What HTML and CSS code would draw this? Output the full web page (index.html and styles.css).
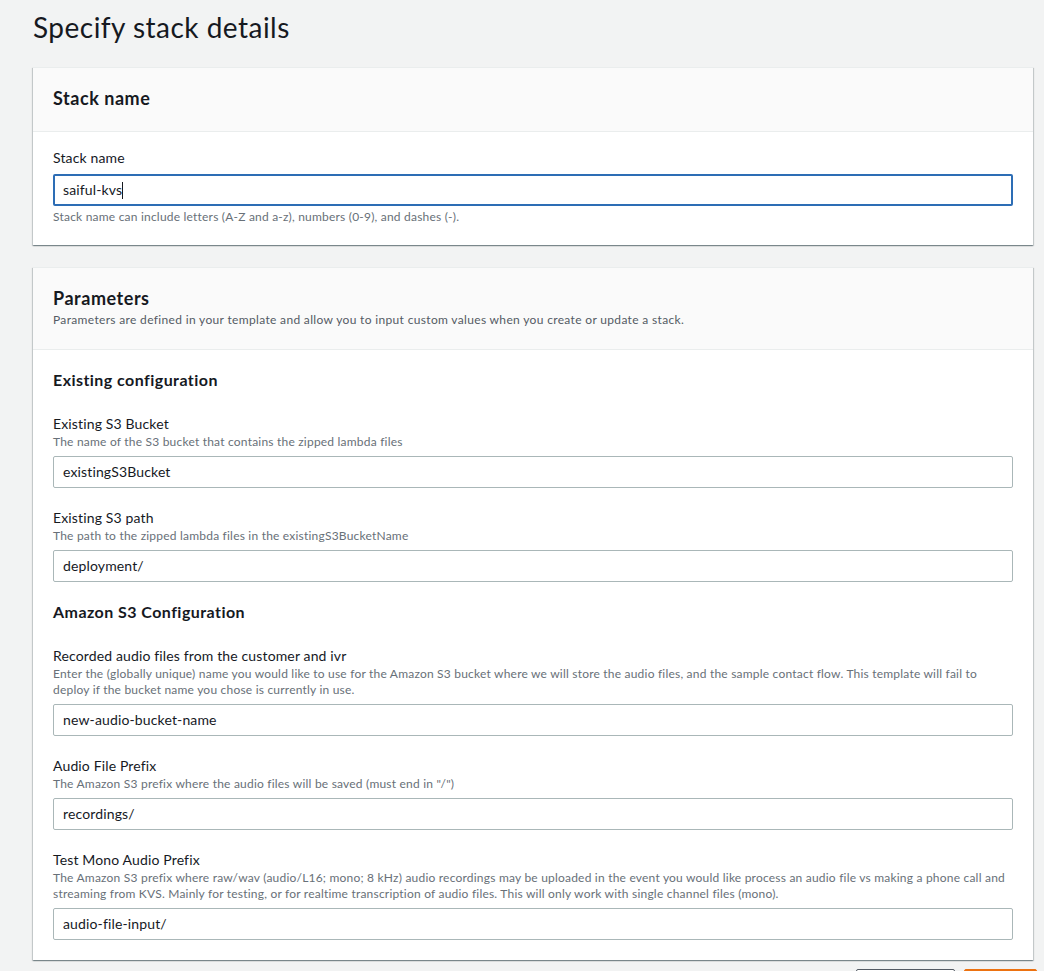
FILE: index.html
```html
<!DOCTYPE html>
<html lang="en">
<head>
<meta charset="utf-8">
<title>Specify stack details</title>
<link rel="stylesheet" href="styles.css">
</head>
<body>
<main class="page">
  <h1 class="page-title">Specify stack details</h1>

  <section class="card card-stack">
    <header class="card-header">
      <h2 class="card-title">Stack name</h2>
    </header>
    <div class="card-body">
      <div class="field">
        <label class="field-label">Stack name</label>
        <div class="input input-focused">saiful-kvs<span class="caret"></span></div>
        <p class="field-hint">Stack name can include letters (A-Z and a-z), numbers (0-9), and dashes (-).</p>
      </div>
    </div>
  </section>

  <section class="card card-params">
    <header class="card-header">
      <h2 class="card-title">Parameters</h2>
      <p class="card-desc">Parameters are defined in your template and allow you to input custom values when you create or update a stack.</p>
    </header>
    <div class="card-body">
      <h3 class="group-title">Existing configuration</h3>
      <div class="field">
        <label class="field-label">Existing S3 Bucket</label>
        <p class="field-desc">The name of the S3 bucket that contains the zipped lambda files</p>
        <div class="input">existingS3Bucket</div>
      </div>
      <div class="field">
        <label class="field-label">Existing S3 path</label>
        <p class="field-desc">The path to the zipped lambda files in the existingS3BucketName</p>
        <div class="input">deployment/</div>
      </div>

      <h3 class="group-title">Amazon S3 Configuration</h3>
      <div class="field">
        <label class="field-label">Recorded audio files from the customer and ivr</label>
        <p class="field-desc">Enter the (globally unique) name you would like to use for the Amazon S3 bucket where we will store the audio files, and the sample contact flow. This template will fail to deploy if the bucket name you chose is currently in use.</p>
        <div class="input">new-audio-bucket-name</div>
      </div>
      <div class="field">
        <label class="field-label">Audio File Prefix</label>
        <p class="field-desc">The Amazon S3 prefix where the audio files will be saved (must end in "/")</p>
        <div class="input">recordings/</div>
      </div>
      <div class="field">
        <label class="field-label">Test Mono Audio Prefix</label>
        <p class="field-desc">The Amazon S3 prefix where raw/wav (audio/L16; mono; 8 kHz) audio recordings may be uploaded in the event you would like process an audio file vs making a phone call and streaming from KVS. Mainly for testing, or for realtime transcription of audio files. This will only work with single channel files (mono).</p>
        <div class="input">audio-file-input/</div>
      </div>
    </div>
  </section>

  <div class="actions">
    <button class="btn btn-normal" aria-label="Previous"></button>
    <button class="btn btn-primary" aria-label="Next"></button>
  </div>
</main>
</body>
</html>
```

FILE: styles.css
```css
* { box-sizing: border-box; }

html, body {
  margin: 0;
  padding: 0;
  background: #f2f3f3;
  overflow: hidden;
}

body {
  font-family: Lato, "Noto Sans", Arial, sans-serif;
  color: #16191f;
  letter-spacing: 0.013em;
}

.page {
  width: 1000px;
  margin-left: 33px;
  padding-top: 9px;
}

.page-title {
  margin: 0;
  font-size: 28px;
  line-height: 36px;
  font-weight: 400;
  letter-spacing: 0.017em;
  color: #16191f;
}

.card {
  margin-top: 22px;
  background: #ffffff;
  border-top: 1px solid #eaeded;
  box-shadow: 0 1px 1px 0 rgba(0, 28, 36, 0.3),
              1px 1px 1px 0 rgba(0, 28, 36, 0.15),
              -1px 1px 1px 0 rgba(0, 28, 36, 0.15);
}

.card-header {
  background: #fafafa;
  border-bottom: 1px solid #eaeded;
  padding: 20px 20px 23px;
}

.card-params .card-header { padding-bottom: 19px; }

.card-title {
  margin: 0;
  font-size: 18px;
  line-height: 20px;
  font-weight: 700;
  letter-spacing: 0.03em;
}

.card-desc {
  margin: 2px 0 0;
  font-size: 12px;
  line-height: 20px;
  color: #545b64;
  letter-spacing: 0.028em;
}

.card-body {
  padding: 18px 20px 20px;
}

.card-stack .card-body { padding-top: 16px; }

.group-title {
  margin: 0 0 22px;
  font-size: 16px;
  line-height: 24px;
  font-weight: 700;
  letter-spacing: 0.028em;
}

.field + .field { margin-top: 20px; }
.field + .group-title { margin-top: 18px; }

.field-label {
  display: block;
  font-size: 14px;
  line-height: 20px;
  letter-spacing: 0.01em;
  color: #16191f;
}

.field-desc {
  margin: 0;
  font-size: 12px;
  line-height: 16px;
  color: #687078;
}

.field-hint {
  margin: 3px 0 0;
  font-size: 12px;
  line-height: 16px;
  color: #687078;
}

.input {
  margin-top: 6px;
  height: 32px;
  border: 1px solid #aab7b8;
  border-radius: 2px;
  padding: 0 9px;
  font-size: 14px;
  line-height: 30px;
  letter-spacing: 0.01em;
  color: #16191f;
  background: #fff;
  white-space: nowrap;
}

.input-focused {
  border: 2px solid #2d6db5;
  padding: 0 8px;
  line-height: 28px;
}

.caret {
  display: inline-block;
  width: 1px;
  height: 17px;
  background: #16191f;
  vertical-align: -4px;
}

.actions {
  display: flex;
  justify-content: flex-end;
  gap: 9px;
  margin-top: 9px;
  margin-right: -4px;
}

.btn {
  height: 32px;
  border-radius: 2px;
  padding: 0;
}

.btn-normal {
  width: 99px;
  background: #fff;
  border: 1px solid #545b64;
}

.btn-primary {
  width: 73px;
  background: #ec7211;
  border: 1px solid #ec7211;
}
```
